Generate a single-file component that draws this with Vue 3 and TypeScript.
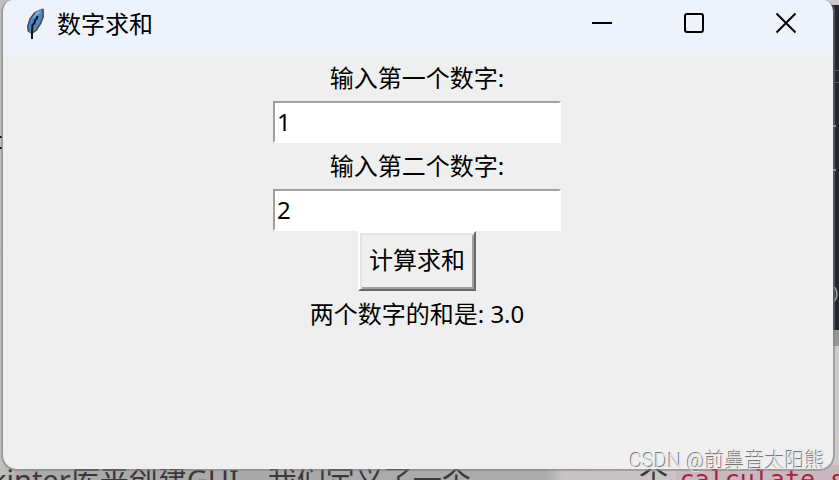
<script setup lang="ts">
import { ref } from 'vue'

const first = ref('1')
const second = ref('2')
const result = ref('两个数字的和是: 3.0')

function format(n: number): string {
  return Number.isInteger(n) ? n.toFixed(1) : String(n)
}

function calculateSum(): void {
  const sum = Number(first.value) + Number(second.value)
  result.value = Number.isNaN(sum) ? '请输入有效的数字' : `两个数字的和是: ${format(sum)}`
}
</script>

<template>
  <div class="desktop">
    <div class="backdrop" aria-hidden="true">
      <div class="editor">
        <span class="code-line"></span>
        <span class="code-line dim"></span>
        <span class="code-mark"></span>
        <span class="code-mark second"></span>
        <span class="code-paren">)</span>
      </div>
      <span class="edge-mark"></span>
      <span class="edge-mark lower"></span>
      <p class="article">kinter库来创建GUI，我们定义了一个</p>
      <p class="article-side">个 <code>calculate_s</code></p>
      <span class="quote">"</span>
    </div>

    <main class="window">
      <header class="titlebar">
        <svg class="feather" viewBox="0 0 20 32" aria-hidden="true">
          <path d="M16 .5 9 3.500 4 10 1 18l.5 5.500 3.500 2.500 5.500-3.500 4.500-6L18 9V1z" fill="#7b8085" />
          <path d="M14.500 2.500 9.500 5.500 5 11.500 3 18l1 4.500 2 1 4-4 3.500-6 2.500-6V3.500z" fill="#4389d3" />
          <path d="M12 3.500 9 6 6 11l4-3 5-4z" fill="#79b4e8" />
          <path d="M17 1v7.500L14.500 15.500l-4 6.500-4 3M9 4.500 4 11 1.800 18.500l1 5" fill="none" stroke="#4a4e52" stroke-width="1.500" />
          <path d="m11.500 8-1 3-1.500 1-.5 3-2 2-.5 6v8" fill="none" stroke="#101820" stroke-width="2" />
        </svg>
        <h1>数字求和</h1>
        <div class="controls">
          <button type="button" aria-label="最小化">
            <svg viewBox="0 0 22 22"><path d="M1 11h20" /></svg>
          </button>
          <button type="button" aria-label="最大化">
            <svg viewBox="0 0 22 22"><rect x="2" y="2" width="18" height="18" rx="2" /></svg>
          </button>
          <button type="button" aria-label="关闭">
            <svg viewBox="0 0 22 22"><path d="m1.500 1.500 19 19m0-19-19 19" /></svg>
          </button>
        </div>
      </header>

      <form class="content" @submit.prevent="calculateSum">
        <label for="first">输入第一个数字:</label>
        <input id="first" v-model="first" type="text" autocomplete="off" />
        <label for="second">输入第二个数字:</label>
        <input id="second" v-model="second" type="text" autocomplete="off" />
        <button class="calculate" type="submit">计算求和</button>
        <output for="first second">{{ result }}</output>
      </form>
    </main>

    <p class="watermark">CSDN @前鼻音太阳熊</p>
  </div>
</template>

<style>
body {
  margin: 0;
}
</style>

<style scoped>
.desktop {
  position: relative;
  display: flex;
  box-sizing: border-box;
  min-height: 100vh;
  padding: 0 4px 9px 1px;
  overflow: hidden;
  background: linear-gradient(to right, #c2c2c2, #a9a9a9 24px, #ababab 65%, #c4c2c3 67%, #cccacb);
  font-family: "Noto Sans", "Noto Sans CJK SC", sans-serif;
  font-size: 24px;
  color: #000;
}

.backdrop {
  position: absolute;
  inset: 0;
  overflow: hidden;
}

.backdrop p {
  margin: 0;
  white-space: nowrap;
}

.editor {
  position: absolute;
  top: 5px;
  right: 0;
  width: 24px;
  height: 325px;
  border-bottom: 16px solid #989796;
  background: #24272d;
}

.code-line,
.code-mark {
  position: absolute;
  top: 65px;
  right: 0;
  width: 4px;
  height: 1px;
  background: #4c5b66;
}

.code-line.dim {
  top: 77px;
}

.code-mark {
  top: 120px;
  right: 3px;
  height: 2px;
  background: #a59688;
}

.code-mark.second {
  top: 164px;
}

.code-paren {
  position: absolute;
  top: 276px;
  right: 1px;
  font-size: 16px;
  line-height: 24px;
  color: #9eacb8;
}

.edge-mark {
  position: absolute;
  top: 136px;
  left: 0;
  width: 2px;
  height: 2px;
  background: #111;
}

.edge-mark.lower {
  top: 147px;
}

.article,
.article-side {
  position: absolute;
  top: 464px;
  left: -9px;
  font-size: 29px;
  line-height: 32px;
  color: #393939;
}

.article-side {
  top: 461px;
  left: 639px;
}

.article-side code {
  padding: 0 4px;
  background: #c7b9be;
  font-family: "DejaVu Sans Mono", monospace;
  font-size: 25px;
  color: #a91f45;
}

.quote {
  position: absolute;
  right: -7px;
  top: 424px;
  font-style: italic;
  line-height: 32px;
  color: #333;
}

.window {
  position: relative;
  display: flex;
  flex: 1;
  flex-direction: column;
  min-width: 0;
  border: 2px solid rgb(128 128 128 / 55%);
  border-top: 0;
  border-radius: 12px 12px 16px 16px;
  background: #efefef;
  background-clip: padding-box;
  overflow: hidden;
}

.titlebar {
  display: flex;
  align-items: center;
  height: 55px;
  background: #eef3fb;
}

.feather {
  width: 20px;
  height: 32px;
  margin: 0 11px 7px 23px;
}

h1 {
  margin: 0 auto 7px 0;
  font-size: 24px;
  font-weight: 400;
  line-height: 32px;
}

.controls {
  display: flex;
  align-self: flex-start;
  padding-right: 1px;
}

.controls button {
  display: flex;
  align-items: center;
  justify-content: center;
  width: 92px;
  height: 46px;
  padding: 0;
  border: 0;
  background: transparent;
}

.controls svg {
  width: 22px;
  height: 22px;
  fill: none;
  stroke: #000;
  stroke-width: 2;
}

.content {
  display: flex;
  flex-direction: column;
  align-items: center;
  padding-right: 2px;
}

label,
output {
  line-height: 46px;
}

input {
  box-sizing: border-box;
  width: 288px;
  max-width: 100%;
  height: 42px;
  padding: 0 2px 2px;
  border: 2px solid #fff;
  border-top-color: #a0a0a0;
  border-left-color: #a0a0a0;
  border-radius: 0;
  outline: 0;
  background: #fff;
  font: inherit;
  color: inherit;
}

.calculate {
  height: 60px;
  padding: 0 9px 6px;
  border: 2px solid;
  border-color: #fff #696969 #696969 #fff;
  border-radius: 0;
  background: #efefef;
  box-shadow: inset 2px 2px #e3e3e3, inset -2px -2px #a0a0a0;
  font: inherit;
  color: inherit;
}

.watermark {
  position: absolute;
  right: 14px;
  bottom: 5px;
  margin: 0;
  font-family: Roboto, "Noto Sans CJK SC", sans-serif;
  font-size: 20px;
  font-weight: 300;
  line-height: 28px;
  color: #e4e4e4;
  text-shadow: -1px -1px #777;
}
</style>
